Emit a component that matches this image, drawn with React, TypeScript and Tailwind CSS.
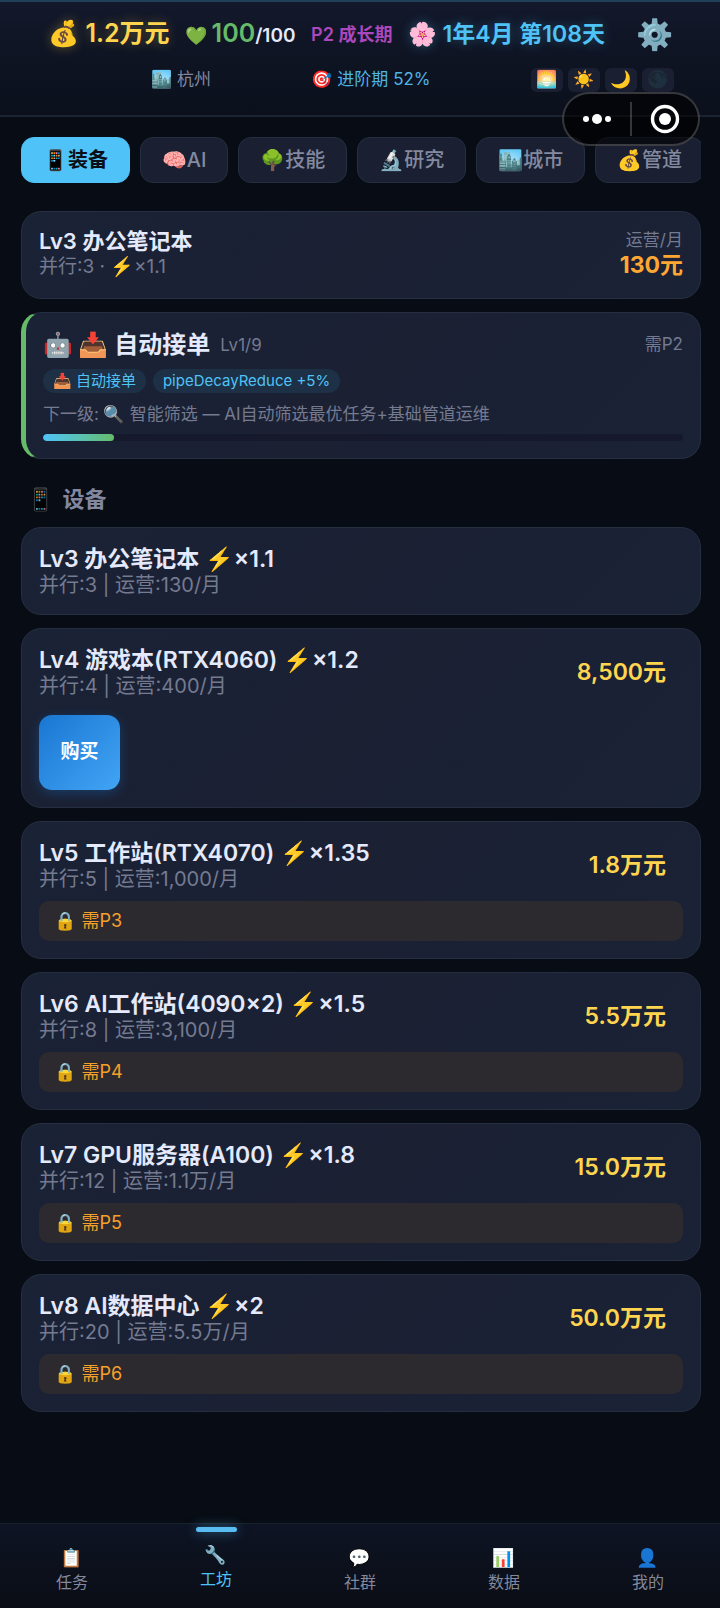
import React from "react";

type Device = {
  name: string;
  speed: string;
  detail: string;
  price?: string;
  lock?: string;
  buyable?: boolean;
};

const tabs = ["📱装备", "🧠AI", "🌳技能", "🔬研究", "🏙️城市", "💰管道"];

const devices: Device[] = [
  { name: "Lv3 办公笔记本", speed: "×1.1", detail: "并行:3 | 运营:130/月" },
  { name: "Lv4 游戏本(RTX4060)", speed: "×1.2", detail: "并行:4 | 运营:400/月", price: "8,500元", buyable: true },
  { name: "Lv5 工作站(RTX4070)", speed: "×1.35", detail: "并行:5 | 运营:1,000/月", price: "1.8万元", lock: "需P3" },
  { name: "Lv6 AI工作站(4090×2)", speed: "×1.5", detail: "并行:8 | 运营:3,100/月", price: "5.5万元", lock: "需P4" },
  { name: "Lv7 GPU服务器(A100)", speed: "×1.8", detail: "并行:12 | 运营:1.1万/月", price: "15.0万元", lock: "需P5" },
  { name: "Lv8 AI数据中心", speed: "×2", detail: "并行:20 | 运营:5.5万/月", price: "50.0万元", lock: "需P6" },
];

const navItems = [
  { icon: "📋", label: "任务" },
  { icon: "🔧", label: "工坊" },
  { icon: "💬", label: "社群" },
  { icon: "📊", label: "数据" },
  { icon: "👤", label: "我的" },
];

const cardClass =
  "rounded-[20px] border border-[#262e41] bg-linear-135 from-[#1a2235] via-[#1b2033] to-[#1a2235] px-[17px] py-[17px]";

function Header() {
  return (
    <header className="h-[117px] border-t-2 border-b-2 border-t-[#22405a] border-b-[#1c2431] bg-linear-to-b from-[#13182b] to-[#0b101c]">
      <div className="flex h-16 items-center justify-between pr-[46px] pl-[48px] whitespace-nowrap">
        <span className="text-[25px] font-semibold text-[#ffd54f] [text-shadow:0_0_12px_#ffd54f55]">💰 1.2万元</span>
        <span className="flex items-baseline text-[19px] font-semibold text-[#e4e9fb]">
          <span className="mr-1 text-[18px]">💚</span>
          <span className="text-[25px] text-[#66bb6a]">100</span>/100
        </span>
        <span className="text-[18px] font-semibold text-[#ab47bc]">P2 成长期</span>
        <span className="text-[23px] font-semibold text-[#4fc3f7] [text-shadow:0_0_12px_#4fc3f755]">🌸 1年4月 第108天</span>
        <button aria-label="设置" className="ml-4 text-[30px] leading-[36px]">⚙️</button>
      </div>
      <div className="flex h-7 items-center justify-between pr-[46px] pl-[151px] text-[17px] whitespace-nowrap">
        <span className="text-[#8388a0]">🏙️ 杭州</span>
        <span className="text-[#4fb4e3]">🎯 进阶期 52%</span>
        <span className="flex gap-[5px]">
          {["🌅", "☀️", "🌙", "🌑"].map((phase, i) => (
            <span
              key={phase}
              className="flex h-6 w-8 items-center justify-center rounded-md bg-[#1a2032]"
            >
              <span className={i === 3 ? "opacity-50" : ""}>{phase}</span>
            </span>
          ))}
        </span>
      </div>
    </header>
  );
}

function Capsule() {
  return (
    <div className="absolute top-[92px] right-[20px] flex h-[54px] w-[138px] items-center rounded-full border-2 border-white/20 bg-black/60">
      <button aria-label="更多" className="flex flex-1 items-center justify-center">
        <svg width="30" height="12" viewBox="0 0 30 12" fill="#fff">
          <circle cx="4" cy="6" r="3" />
          <circle cx="15" cy="6" r="5" />
          <circle cx="26" cy="6" r="3" />
        </svg>
      </button>
      <span className="h-[34px] w-0.5 bg-white/20" />
      <button aria-label="关闭" className="flex flex-1 items-center justify-center">
        <svg width="30" height="30" viewBox="0 0 30 30">
          <circle cx="15" cy="15" r="12.5" fill="none" stroke="#fff" strokeWidth="3.4" />
          <circle cx="15" cy="15" r="6" fill="#fff" />
        </svg>
      </button>
    </div>
  );
}

function DeviceCard({ device }: { device: Device }) {
  return (
    <article className={cardClass}>
      <div className="flex items-center justify-between">
        <div>
          <h3 className="text-[23px] leading-7 font-semibold text-[#e4e9fb]">
            {device.name} ⚡{device.speed}
          </h3>
          <p className="text-[20px] leading-6 text-[#747a90]">{device.detail}</p>
        </div>
        {device.price && <span className="mr-[17px] text-[23px] leading-7 font-semibold text-[#ffd54f]">{device.price}</span>}
      </div>
      {device.buyable && (
        <button className="mt-[17px] block h-[75px] w-[81px] rounded-[13px] bg-linear-135 from-[#1976d2] to-[#42a5f5] text-[19px] font-bold text-white shadow-[0_3px_12px_#1976d255]">
          购买
        </button>
      )}
      {device.lock && (
        <p className="mt-[10px] rounded-[10px] bg-[#2d2a2f] px-[15px] text-[18px] leading-10 text-[#f5a02a]">🔒 {device.lock}</p>
      )}
    </article>
  );
}

export default function App() {
  return (
    <div className="relative flex min-h-screen flex-col bg-[#080c14] font-[Inter,'Noto_Sans_CJK_SC','Noto_Color_Emoji',sans-serif]">
      <Header />
      <Capsule />
      <main className="flex flex-1 flex-col pt-5 pr-[19px] pb-[110px] pl-[21px]">
        <nav className="mb-7 flex gap-[10px] overflow-hidden">
          {tabs.map((tab, i) => (
            <button
              key={tab}
              className={
                "h-[46px] shrink-0 rounded-[13px] border px-[21px] text-[20px] font-medium whitespace-nowrap " +
                (i === 0
                  ? "border-[#4fc3f7] bg-[#4fc3f7] font-semibold text-[#0a0e17]"
                  : "border-[#262e41] bg-[#1a2032] text-[#83899f]")
              }
            >
              {tab}
            </button>
          ))}
        </nav>

        <div className="flex flex-col gap-[13px]">
          <section className={cardClass + " flex justify-between"}>
            <div>
              <h2 className="text-[22px] leading-6 font-semibold text-[#e4e9fb]">Lv3 办公笔记本</h2>
              <p className="text-[19px] leading-7 text-[#747a90]">并行:3 · ⚡×1.1</p>
            </div>
            <div className="text-right">
              <p className="text-[17px] leading-[22px] text-[#747a90]">运营/月</p>
              <p className="text-[23px] leading-7 font-bold text-[#ffa733]">130元</p>
            </div>
          </section>

          <section className={cardClass + " border-l-5 border-l-[#66bb6a]"}>
            <div className="flex items-center justify-between">
              <h2 className="flex items-center gap-[10px] text-[24px] leading-[30px] font-bold text-[#e4e9fb]">
                <span>🤖 📥 自动接单</span>
                <span className="text-[17px] font-normal text-[#747a90]">Lv1/9</span>
              </h2>
              <span className="text-[17px] text-[#747a90]">需P2</span>
            </div>
            <div className="mt-[9px] flex gap-[7px] text-[15px] leading-6 text-[#4fc3f7]">
              <span className="rounded-full bg-[#1d3045] px-[10px]">📥 自动接单</span>
              <span className="rounded-full bg-[#1d3045] px-[10px]">pipeDecayReduce +5%</span>
            </div>
            <p className="mt-[9px] text-[17px] leading-6 text-[#747a90]">下一级: 🔍 智能筛选 — AI自动筛选最优任务+基础管道运维</p>
            <div className="mt-2 h-[7px] overflow-hidden rounded-full bg-[#15192b]">
              <div className="h-full w-1/9 rounded-full bg-linear-to-r from-[#4fc3f7] to-[#66bb6a]" />
            </div>
          </section>
        </div>

        <h2 className="mt-[25px] mb-[13px] flex gap-2 pl-[6px] text-[22px] leading-[30px] font-semibold text-[#8388a0]">
          <span className="opacity-80">📱</span>
          <span>设备</span>
        </h2>
        <div className="flex flex-col gap-[13px]">
          {devices.map((device) => (
            <DeviceCard key={device.name} device={device} />
          ))}
        </div>
      </main>

      <nav className="fixed inset-x-0 bottom-0 grid h-[85px] grid-cols-5 border-t border-[#18222e] bg-linear-to-b from-[#0e1424] to-[#0a0d15]">
        {navItems.map((item, i) => (
          <a
            key={item.label}
            href="#"
            className={
              "relative flex flex-col items-center text-[16px] leading-6 " +
              (i === 1 ? "pt-[19px] text-[#4fc3f7]" : "pt-[22px] text-[#83889d]")
            }
          >
            {i === 1 && (
              <span className="absolute top-[3px] h-[5px] w-[41px] rounded-full bg-[#5abdf2] shadow-[0_0_12px_#4fc3f788]" />
            )}
            <span className="text-[18px]">{item.icon}</span>
            <span>{item.label}</span>
          </a>
        ))}
      </nav>
    </div>
  );
}
